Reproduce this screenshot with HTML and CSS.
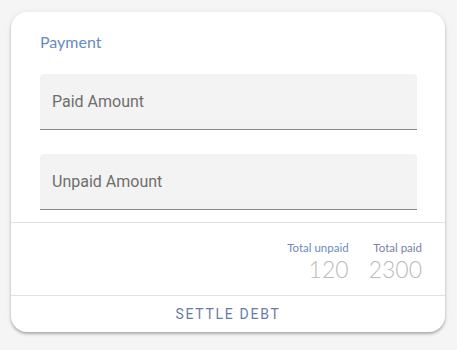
FILE: index.html
```html
<html>
<head>
    <meta http-equiv="Content-Type" content="text/html;charset=utf-8">
    <link rel="stylesheet" href="styles.css">
</head>
<body>
    <div id="card">
        <div class="fields">
            <div class="title">Payment</div>
            <div class="field"><span>Paid Amount</span></div>
            <div class="field second"><span>Unpaid Amount</span></div>
        </div>
        <div class="totals">
            <div class="total">
                <div class="label">Total unpaid</div>
                <div class="num">120</div>
            </div>
            <div class="total">
                <div class="label paid">Total paid</div>
                <div class="num">2300</div>
            </div>
        </div>
        <div class="actions">
            <a href="#" class="settle">SETTLE DEBT</a>
        </div>
    </div>
</body>
</html>
```

FILE: styles.css
```css
body {
    margin: 0;
    background-color: #f5f5f5;
    font-family: Roboto, "Liberation Sans", sans-serif;
}

#card {
    width: 434px;
    height: 320px;
    margin: 12px 0 0 11px;
    background-color: #fff;
    border-radius: 16px;
    box-shadow: 0 2px 3px rgba(0,0,0,0.28), 0 0 6px rgba(0,0,0,0.06);
    overflow: hidden;
}

.fields {
    padding: 20px 28px 12px 29px;
    border-bottom: 1px solid #e2e2e2;
}

.title {
    font-family: Lato, "Open Sans", sans-serif;
    font-size: 16px;
    line-height: 20px;
    color: #6a8ac4;
    margin-bottom: 22px;
}

.field {
    height: 55px;
    background-color: #f3f3f3;
    border-bottom: 1px solid #8a8a8a;
    border-radius: 4px 4px 0 0;
    padding-left: 12px;
    display: flex;
    align-items: center;
    font-size: 16px;
    color: #6e6e6e;
}

.field.second {
    margin-top: 24px;
}

.totals {
    height: 73px;
    display: flex;
    justify-content: flex-end;
    gap: 20px;
    padding: 17px 23px 0 0;
    box-sizing: border-box;
    border-bottom: 1px solid #e2e2e2;
}

.total {
    text-align: right;
}

.label {
    font-family: Lato, "Open Sans", sans-serif;
    font-size: 11.5px;
    line-height: 15px;
    color: #6b8bc0;
}

.label.paid {
    color: #7a80a8;
}

.num {
    font-family: Lato, "Open Sans", sans-serif;
    font-size: 23px;
    line-height: 28px;
    font-weight: 300;
    color: #bbb;
}

.actions {
    height: 35px;
    display: flex;
    align-items: center;
    justify-content: center;
}

.settle {
    color: #6a7ba8;
    text-decoration: none;
    font-size: 14px;
    letter-spacing: 1.7px;
}
```
